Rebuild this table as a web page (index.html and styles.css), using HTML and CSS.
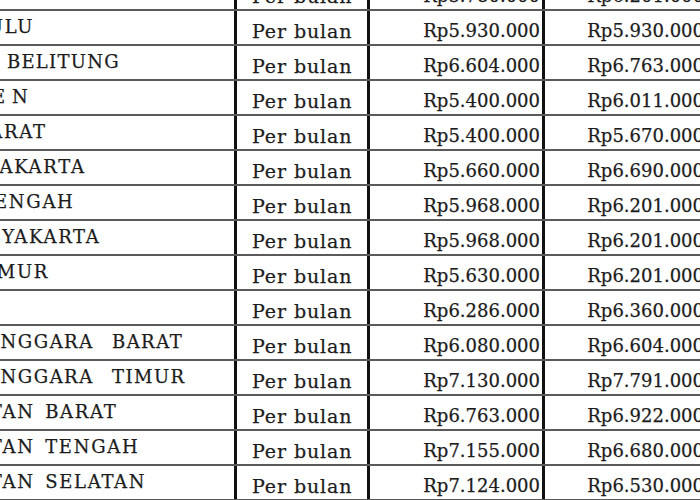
FILE: index.html
```html
<!DOCTYPE html>
<html lang="id">
<head>
<meta charset="utf-8">
<title>UMP per provinsi</title>
<link rel="stylesheet" href="styles.css">
</head>
<body>
<div class="sheet">
  <div class="row"><div class="cell name">LAMPUNG</div><div class="cell unit">Per bulan</div><div class="cell num">Rp5.780.000</div><div class="cell num last">Rp6.201.000</div></div>
  <div class="row"><div class="cell name">BENGKULU</div><div class="cell unit">Per bulan</div><div class="cell num">Rp5.930.000</div><div class="cell num last">Rp5.930.000</div></div>
  <div class="row"><div class="cell name bangka">BANGKA BELITUNG</div><div class="cell unit">Per bulan</div><div class="cell num">Rp6.604.000</div><div class="cell num last">Rp6.763.000</div></div>
  <div class="row"><div class="cell name spread">BANTEN</div><div class="cell unit">Per bulan</div><div class="cell num">Rp5.400.000</div><div class="cell num last">Rp6.011.000</div></div>
  <div class="row"><div class="cell name">JAWA BARAT</div><div class="cell unit">Per bulan</div><div class="cell num">Rp5.400.000</div><div class="cell num last">Rp5.670.000</div></div>
  <div class="row"><div class="cell name dki">DKI JAKARTA</div><div class="cell unit">Per bulan</div><div class="cell num">Rp5.660.000</div><div class="cell num last">Rp6.690.000</div></div>
  <div class="row"><div class="cell name jateng">JAWA TENGAH</div><div class="cell unit">Per bulan</div><div class="cell num">Rp5.968.000</div><div class="cell num last">Rp6.201.000</div></div>
  <div class="row"><div class="cell name diy">DI YOGYAKARTA</div><div class="cell unit">Per bulan</div><div class="cell num">Rp5.968.000</div><div class="cell num last">Rp6.201.000</div></div>
  <div class="row"><div class="cell name">JAWA TIMUR</div><div class="cell unit">Per bulan</div><div class="cell num">Rp5.630.000</div><div class="cell num last">Rp6.201.000</div></div>
  <div class="row"><div class="cell name"></div><div class="cell unit">Per bulan</div><div class="cell num">Rp6.286.000</div><div class="cell num last">Rp6.360.000</div></div>
  <div class="row"><div class="cell name wide">NUSA TENGGARA BARAT</div><div class="cell unit">Per bulan</div><div class="cell num">Rp6.080.000</div><div class="cell num last">Rp6.604.000</div></div>
  <div class="row"><div class="cell name wide">NUSA TENGGARA TIMUR</div><div class="cell unit">Per bulan</div><div class="cell num">Rp7.130.000</div><div class="cell num last">Rp7.791.000</div></div>
  <div class="row"><div class="cell name kal">KALIMANTAN BARAT</div><div class="cell unit">Per bulan</div><div class="cell num">Rp6.763.000</div><div class="cell num last">Rp6.922.000</div></div>
  <div class="row"><div class="cell name kal">KALIMANTAN TENGAH</div><div class="cell unit">Per bulan</div><div class="cell num">Rp7.155.000</div><div class="cell num last">Rp6.680.000</div></div>
  <div class="row"><div class="cell name kal">KALIMANTAN SELATAN</div><div class="cell unit">Per bulan</div><div class="cell num">Rp7.124.000</div><div class="cell num last">Rp6.530.000</div></div>
</div>
</body>
</html>
```

FILE: styles.css
```css
html, body {
  margin: 0;
  padding: 0;
  background: #ffffff;
  overflow: hidden;
}

body {
  width: 700px;
  height: 500px;
  font-family: "DejaVu Serif", "Liberation Serif", serif;
  font-size: 18px;
  color: #1c1c1c;
  -webkit-text-stroke: 0.25px #1c1c1c;
}

.sheet {
  margin-top: -24px;
  margin-left: -90px;
  width: 800px;
}

.row {
  display: grid;
  grid-template-columns: 327px 133px 175px 165px;
  height: 35px;
  box-sizing: border-box;
  border-bottom: 2px solid #5a5a5a;
}

.cell {
  box-sizing: border-box;
  border-right: 3px solid #111111;
  line-height: 18px;
  white-space: nowrap;
  overflow: hidden;
  padding-top: 11px;
}

.cell.last {
  border-right: none;
}

.name {
  padding-top: 7px;
  padding-left: 0;
  letter-spacing: 1.7px;
}

.name.spread {
  letter-spacing: 7px;
}

.name.bangka {
  padding-left: 0;
  letter-spacing: 1.3px;
}

.name.dki {
  padding-left: 33px;
}

.name.jateng {
  padding-left: 6px;
}

.name.diy {
  padding-left: 14px;
}

.name.wide {
  margin-left: -18px;
  word-spacing: 11px;
  letter-spacing: 1.5px;
}

.name.kal {
  padding-left: 0;
  margin-left: -24px;
  word-spacing: 3px;
}

.unit {
  padding-left: 15px;
  font-size: 19px;
  letter-spacing: 0.9px;
}

.num {
  text-align: right;
  padding-right: 2px;
}

.num.last {
  padding-right: 6px;
}
```
